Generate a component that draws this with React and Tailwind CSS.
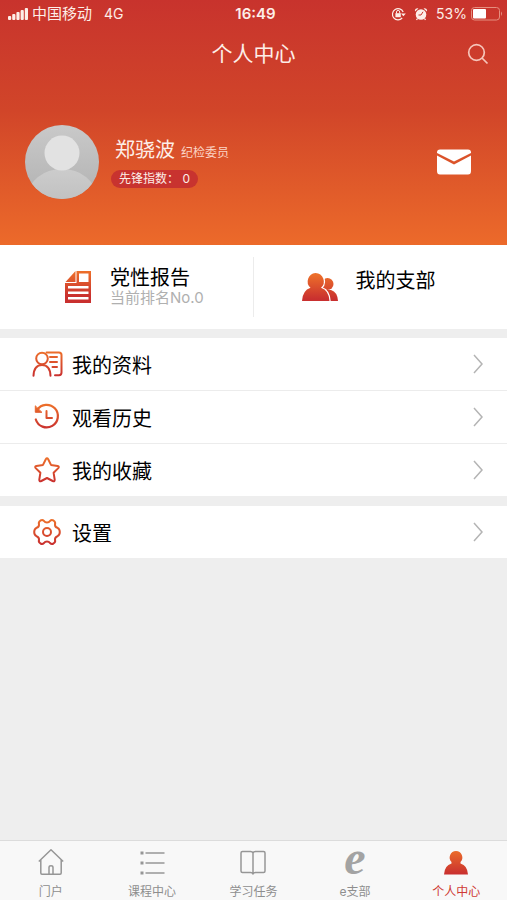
const GradientDefs = () => (
    <svg width="0" height="0" className="absolute" aria-hidden="true">
        <defs>
            <linearGradient id="warm" gradientUnits="userSpaceOnUse" x1="0" y1="2" x2="0" y2="26">
                <stop offset="0" stopColor="#ec6e2a" />
                <stop offset="1" stopColor="#c9302f" />
            </linearGradient>
            <linearGradient id="avatarBg" x1="0" y1="0" x2="0" y2="1">
                <stop offset="0" stopColor="#c9c9c9" />
                <stop offset="1" stopColor="#b2b2b2" />
            </linearGradient>
            <linearGradient id="avatarBody" x1="0" y1="0" x2="0" y2="1">
                <stop offset="0" stopColor="#cccccc" />
                <stop offset="1" stopColor="#b9b9b9" />
            </linearGradient>
            <clipPath id="avatarClip">
                <circle cx="37" cy="37" r="37" />
            </clipPath>
        </defs>
    </svg>
);

const LineIcon = ({ children }) => (
    <svg
        width="32"
        height="28"
        viewBox="0 0 32 28"
        fill="none"
        stroke="url(#warm)"
        strokeWidth="2"
        strokeLinecap="round"
        strokeLinejoin="round"
        aria-hidden="true"
    >
        {children}
    </svg>
);

const ProfileIcon = () => (
    <LineIcon>
        <circle cx="11" cy="8.500" r="5.800" />
        <path d="M2.500 25.800C2.800 19 6 15 11 15S19.200 19 19.500 25.800" />
        <path d="M15.500 2.500H28Q30.500 2.500 30.500 5V22.500Q30.500 25.200 28 25.200H24" />
        <path d="M19 7H26M19 12H26M21.500 17H26" />
    </LineIcon>
);

const HistoryIcon = () => (
    <LineIcon>
        <path d="M6.200 6.800A11.300 11.300 0 1 1 4.800 16.500" strokeWidth="2.200" />
        <path d="M4.300 3.200V9.300H10.500Z" fill="url(#warm)" strokeWidth="1" />
        <path d="M15.500 8V15H21" />
    </LineIcon>
);

const StarIcon = () => (
    <LineIcon>
        <path d="M14.800 3.200Q16 1.200 17.200 3.200L20 8.900L26.600 9.900Q28.600 10.500 27.300 12.100L22.600 16.700L23.700 23.600Q23.800 25.900 21.700 25L16 22L10.300 25Q8.200 25.900 8.300 23.600L9.400 16.700L4.700 12.100Q3.400 10.500 5.400 9.900L12 8.900Z" />
    </LineIcon>
);

const SettingsIcon = () => (
    <LineIcon>
        <circle cx="16" cy="14" r="4" />
        <path d="M16 4.500Q18 4.500 19 3Q20.500 1.500 22.500 2.500Q24.800 4 24 6.200Q23.800 9 26.500 9.800Q28.800 11 28.800 14Q28.800 17 26.500 18.200Q23.800 19 24 21.800Q24.800 24 22.500 25.500Q20.500 26.500 19 25Q18 23.500 16 23.500Q14 23.500 13 25Q11.500 26.500 9.500 25.500Q7.200 24 8 21.800Q8.200 19 5.500 18.200Q3.200 17 3.200 14Q3.200 11 5.500 9.800Q8.200 9 8 6.200Q7.200 4 9.500 2.500Q11.500 1.500 13 3Q14 4.500 16 4.500Z" />
    </LineIcon>
);

const ChevronIcon = () => (
    <svg width="12" height="20" viewBox="0 0 12 20" fill="none" stroke="#b4b4b4" strokeWidth="1.500" aria-hidden="true">
        <path d="M2 1L10 10L2 19" />
    </svg>
);

const StatusBar = () => (
    <div className="grid grid-cols-[1fr_auto_1fr] items-center h-7 pl-2 pr-1 text-sm">
        <div className="flex items-center">
            <svg width="20" height="12" viewBox="0 0 20 12" fill="currentColor" aria-hidden="true">
                <rect x="0" y="8" width="3.200" height="4" rx="1" />
                <rect x="4.200" y="6" width="3.200" height="6" rx="1" />
                <rect x="8.400" y="4" width="3.200" height="8" rx="1" />
                <rect x="12.600" y="2" width="3.200" height="10" rx="1" />
                <rect x="16.800" y="0" width="3.200" height="12" rx="1" />
            </svg>
            <span className="ml-1 text-[15px]">中国移动</span>
            <span className="ml-3">4G</span>
        </div>
        <span className="text-[15px] font-semibold">16:49</span>
        <div className="flex items-center justify-end">
            <svg width="15" height="14" viewBox="0 0 15 14" fill="none" stroke="currentColor" aria-hidden="true">
                <path d="M12.200 5A5.600 5.600 0 1 0 11.200 11" strokeWidth="1.200" />
                <path d="M10 6.500H14.800L12.400 9.300Z" fill="currentColor" stroke="none" />
                <rect x="4.400" y="6.200" width="5.400" height="4" fill="currentColor" stroke="none" />
                <path d="M5.500 6.500V5A1.600 1.600 0 0 1 8.700 5V6.500" />
            </svg>
            <svg width="14" height="14" viewBox="0 0 14 14" className="ml-2" fill="currentColor" aria-hidden="true">
                <circle cx="7" cy="7.500" r="5.300" />
                <path d="M1 4.500A2.500 2.500 0 0 1 4.500 1.500ZM13 4.500A2.500 2.500 0 0 0 9.500 1.500Z" />
                <path d="M3.500 11.500L2.500 13M10.500 11.500L11.500 13" stroke="currentColor" strokeWidth="1.300" />
                <path d="M9 4.800L7 8H4.500" fill="none" stroke="#c9352d" strokeWidth="1" />
            </svg>
            <span className="ml-2">53%</span>
            <svg width="32" height="14" viewBox="0 0 32 14" className="ml-1" aria-hidden="true">
                <rect x="0.500" y="0.500" width="28" height="12.500" rx="3" fill="none" stroke="#e58f80" />
                <rect x="2" y="2" width="13" height="9.500" rx="1" fill="white" />
                <path d="M30 4.500Q32 6.700 30 9Z" fill="#e58f80" />
            </svg>
        </div>
    </div>
);

const Header = () => (
    <header className="bg-linear-to-b from-[#c8332d] via-[#d14529] via-45% to-[#ec6a2a] text-[#fdeee8]">
        <StatusBar />
        <div className="grid grid-cols-[1fr_auto_1fr] items-center h-[52px] px-4">
            <h1 className="col-start-2 text-[21px] leading-7">个人中心</h1>
            <button type="button" aria-label="搜索" className="justify-self-end p-0.5">
                <svg width="22" height="22" viewBox="0 0 22 22" fill="none" stroke="#f6c5ba" strokeWidth="1.700" aria-hidden="true">
                    <circle cx="9.500" cy="9.500" r="7.800" />
                    <path d="M15 15L20.500 20.500" />
                </svg>
            </button>
        </div>
        <div className="flex items-center h-[165px] pl-[25px] pr-8 pb-0.5">
            <svg width="74" height="74" viewBox="0 0 74 74" aria-hidden="true">
                <g clipPath="url(#avatarClip)">
                    <rect width="74" height="74" fill="url(#avatarBg)" />
                    <ellipse cx="37" cy="71" rx="34" ry="27" fill="url(#avatarBody)" />
                    <circle cx="37" cy="28" r="17.500" fill="#e2e2e2" />
                </g>
            </svg>
            <div className="ml-3">
                <div className="flex items-baseline pl-1">
                    <span className="text-xl leading-8">郑骁波</span>
                    <span className="ml-1.5 text-xs text-[#fbd5c6]">纪检委员</span>
                </div>
                <div className="mt-1 inline-block rounded-full bg-[#c8332f] px-2 text-xs leading-[18px] align-top">
                    先锋指数：&nbsp;0
                </div>
            </div>
            <button type="button" aria-label="消息" className="ml-auto p-1">
                <svg width="34" height="26" viewBox="0 0 34 26" fill="white" aria-hidden="true">
                    <path d="M0 3.500Q0 0.500 3 0.500H31Q34 0.500 34 3.500V4L17 12.500L0 4Z" />
                    <path d="M0 6.500L17 15.500L34 6.500V22Q34 25.500 31 25.500H3Q0 25.500 0 22Z" />
                </svg>
            </button>
        </div>
    </header>
);

const QuickLinks = () => (
    <section className="grid grid-cols-2 h-[84px] py-3 bg-white">
        <a href="#report" className="flex items-center pl-16 border-r border-[#ececec]">
            <svg width="28" height="34" viewBox="0 0 28 34" aria-hidden="true">
                <path d="M1.500 12L11.500 1V12Z" fill="url(#warm)" />
                <path
                    d="M11 1H27V33H1V13H12.500V1ZM15 3.500V12H24.500V3.500ZM4 16V18.500H24.500V16ZM4 21.500V24H24.500V21.500ZM4 27V29.500H24.500V27Z"
                    fill="url(#warm)"
                    fillRule="evenodd"
                />
            </svg>
            <span className="ml-[18px] pb-0.5">
                <span className="block text-xl leading-6">党性报告</span>
                <span className="block text-[15px] leading-4 text-[#b0b0b0]">当前排名No.0</span>
            </span>
        </a>
        <a href="#branch" className="flex items-center pl-12">
            <svg width="36" height="28" viewBox="0 0 36 28" fill="url(#warm)" aria-hidden="true">
                <circle cx="25.500" cy="11" r="6" />
                <path d="M20 17H29Q35.500 19 36 28H20Z" />
                <path
                    d="M13.500 0A8.500 8.500 0 0 1 19 14.800Q27 17.500 27.500 28H0Q0.500 17.500 8.500 14.800A8.500 8.500 0 0 1 13.500 0Z"
                    stroke="white"
                    strokeWidth="2.400"
                    paintOrder="stroke"
                />
            </svg>
            <span className="ml-[18px] pb-3 text-xl leading-6">我的支部</span>
        </a>
    </section>
);

const MenuRow = ({ icon, label, href }) => (
    <li>
        <a href={href} className="flex items-center h-[52px] pl-[31px] pr-[23px]">
            {icon}
            <span className="ml-[9px] pt-1 text-xl leading-7">{label}</span>
            <span className="ml-auto">
                <ChevronIcon />
            </span>
        </a>
    </li>
);

const TabItem = ({ icon, label, href, active }) => (
    <a
        href={href}
        aria-current={active ? "page" : undefined}
        className={`flex flex-col items-center text-xs ${active ? "text-[#cf3a35]" : "text-[#8e8e8e]"}`}
    >
        <span className="flex items-center justify-center h-7">{icon}</span>
        <span className="mt-2 leading-4">{label}</span>
    </a>
);

const TabIcon = ({ children }) => (
    <svg width="28" height="28" viewBox="0 0 28 28" fill="none" stroke="#969696" strokeWidth="1.500" strokeLinejoin="round" aria-hidden="true">
        {children}
    </svg>
);

const tabs = [
    {
        label: "门户",
        href: "#home",
        icon: (
            <TabIcon>
                <path d="M1.800 13.500L14 1.800L26.200 13.500M3.800 12V25Q3.800 26.200 5 26.200H23Q24.200 26.200 24.200 25V12" />
                <path d="M12 26V19.500Q12 17.800 14 17.800T16 19.500V26" />
            </TabIcon>
        ),
    },
    {
        label: "课程中心",
        href: "#courses",
        icon: (
            <TabIcon>
                <path d="M7.500 5H26.500M7.500 15H26.500M7.500 25H26.500" />
                <path d="M2.500 5H5.500M2.500 15H5.500M2.500 25H5.500" strokeWidth="3" />
            </TabIcon>
        ),
    },
    {
        label: "学习任务",
        href: "#tasks",
        icon: (
            <TabIcon>
                <path d="M14 5Q13.500 3.500 11.500 3.500H3.500Q2 3.500 2 5V23Q2 24.500 3.500 24.500H11.500Q13.500 24.500 14 26Q14.500 24.500 16.500 24.500H24.500Q26 24.500 26 23V5Q26 3.500 24.500 3.500H16.500Q14.500 3.500 14 5V26" />
            </TabIcon>
        ),
    },
    {
        label: "e支部",
        href: "#e-branch",
        icon: (
            <span className="font-['Liberation_Serif',serif] text-5xl leading-7 pb-2 font-bold italic text-[#a3a3a3]" aria-hidden="true">
                e
            </span>
        ),
    },
    {
        label: "个人中心",
        href: "#me",
        active: true,
        icon: (
            <svg width="24" height="28" viewBox="0 0 24 28" fill="url(#warm)" aria-hidden="true">
                <path d="M12 3A6.500 6.500 0 0 1 16.500 14V15.500Q23.500 17.500 24 26.500H0Q0.500 17.500 7.500 15.500V14A6.500 6.500 0 0 1 12 3Z" />
            </svg>
        ),
    },
];

const App = () => {
    return (
        <div className="flex flex-col min-h-screen bg-[#eeeeee] text-black font-[Inter,'Noto_Sans_CJK_SC',sans-serif]">
            <GradientDefs />
            <Header />
            <main className="flex-1">
                <QuickLinks />
                <ul className="mt-[9px] bg-white divide-y divide-[#ececec]">
                    <MenuRow icon={<ProfileIcon />} label="我的资料" href="#profile" />
                    <MenuRow icon={<HistoryIcon />} label="观看历史" href="#history" />
                    <MenuRow icon={<StarIcon />} label="我的收藏" href="#favorites" />
                </ul>
                <ul className="mt-[10px] bg-white">
                    <MenuRow icon={<SettingsIcon />} label="设置" href="#settings" />
                </ul>
            </main>
            <nav className="grid grid-cols-5 pt-[7px] border-t border-[#dcdcdc] bg-[#f8f8f8]">
                {tabs.map((tab) => (
                    <TabItem key={tab.label} {...tab} />
                ))}
            </nav>
        </div>
    );
};

export default App;
